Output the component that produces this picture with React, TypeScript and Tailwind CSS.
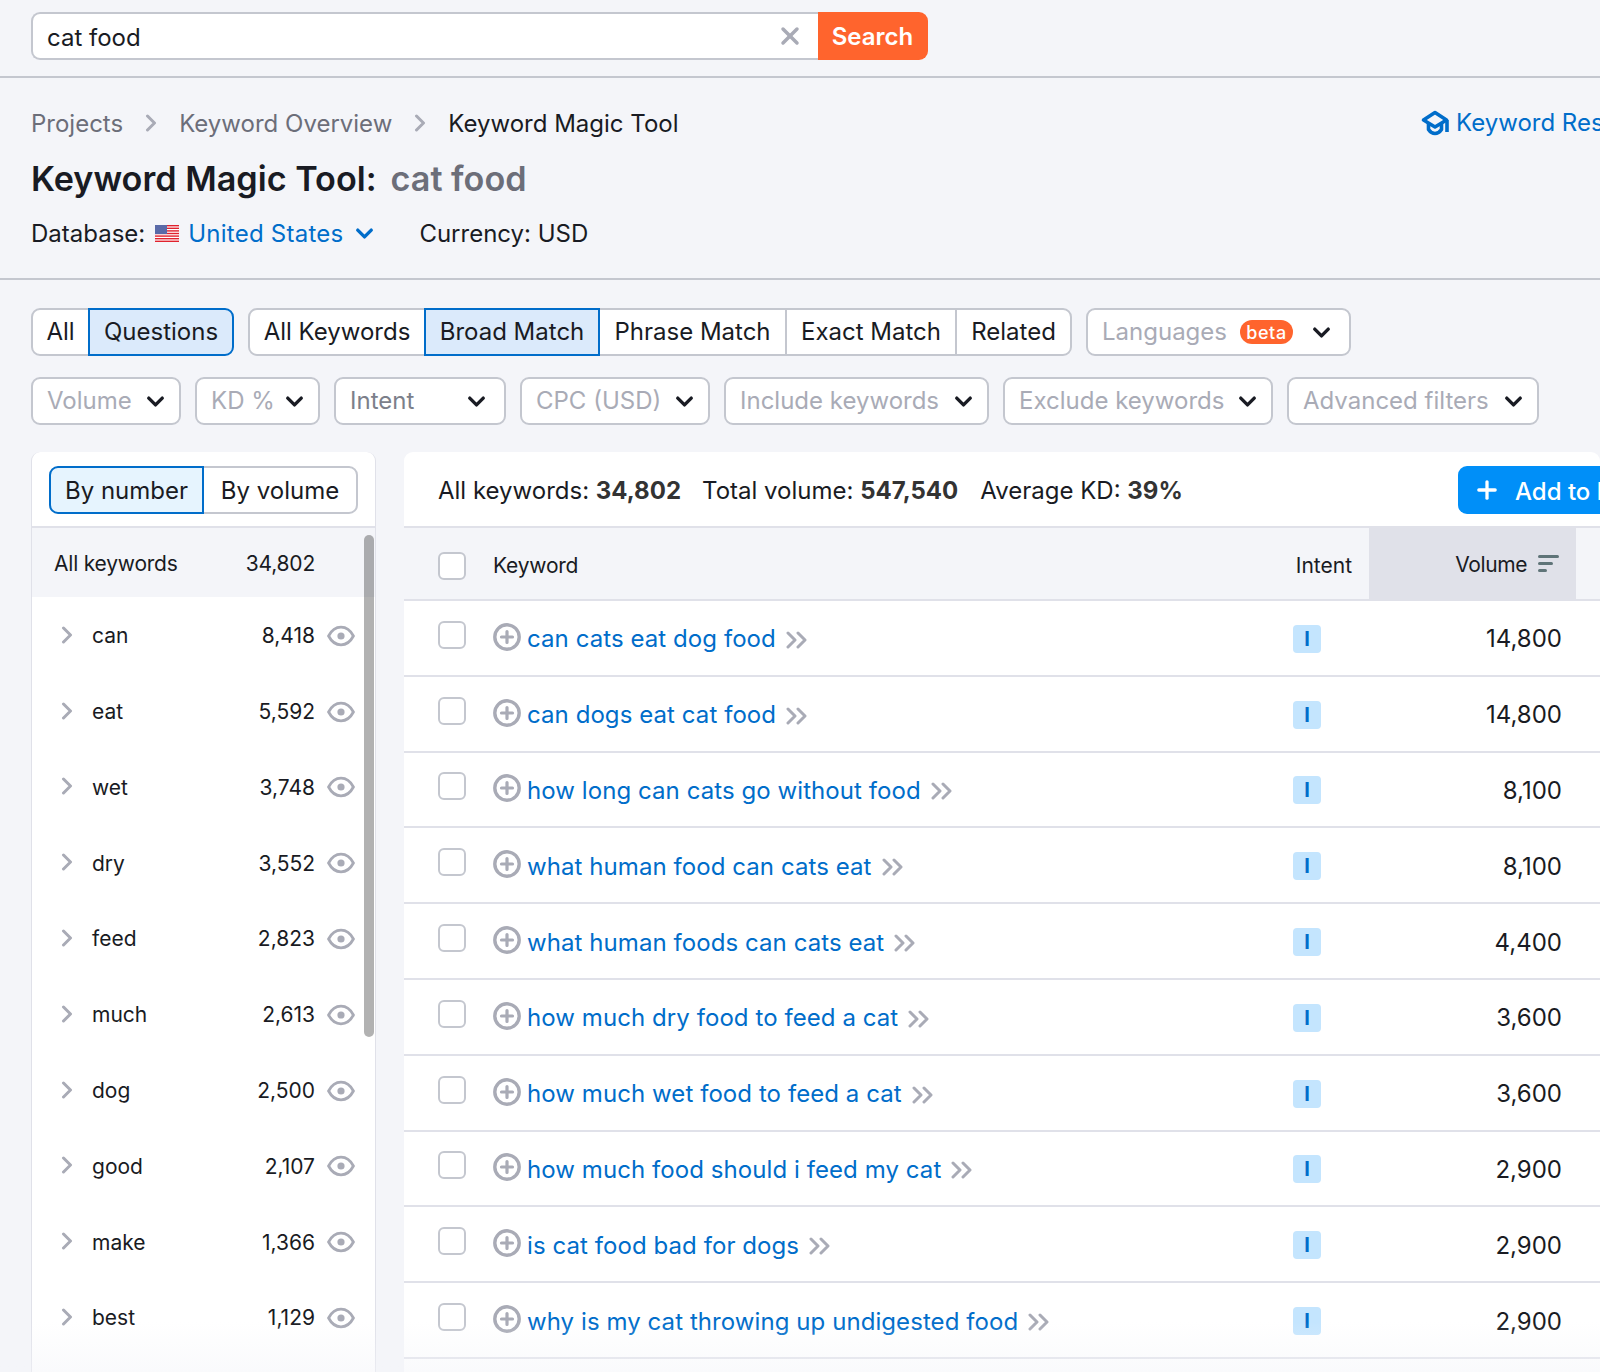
import React from 'react'
import { ChevronDown, Plus, X } from 'lucide-react'

const rows = [
  { keyword: 'can cats eat dog food', volume: '14,800' },
  { keyword: 'can dogs eat cat food', volume: '14,800' },
  { keyword: 'how long can cats go without food', volume: '8,100' },
  { keyword: 'what human food can cats eat', volume: '8,100' },
  { keyword: 'what human foods can cats eat', volume: '4,400' },
  { keyword: 'how much dry food to feed a cat', volume: '3,600' },
  { keyword: 'how much wet food to feed a cat', volume: '3,600' },
  { keyword: 'how much food should i feed my cat', volume: '2,900' },
  { keyword: 'is cat food bad for dogs', volume: '2,900' },
  { keyword: 'why is my cat throwing up undigested food', volume: '2,900' },
]

const groups = [
  { name: 'can', count: '8,418' },
  { name: 'eat', count: '5,592' },
  { name: 'wet', count: '3,748' },
  { name: 'dry', count: '3,552' },
  { name: 'feed', count: '2,823' },
  { name: 'much', count: '2,613' },
  { name: 'dog', count: '2,500' },
  { name: 'good', count: '2,107' },
  { name: 'make', count: '1,366' },
  { name: 'best', count: '1,129' },
]

const filters = [
  { label: 'Volume', className: 'w-[150px] text-[#a9abb6] pr-[10px]' },
  { label: 'KD %', className: 'w-[125px] text-[#a9abb6] pr-[10px]' },
  { label: 'Intent', className: 'w-[172px] text-[#7c7f8a] pr-[14px]' },
  { label: 'CPC (USD)', className: 'w-[190px] text-[#a9abb6] pr-[10px]' },
  { label: 'Include keywords', className: 'w-[265px] text-[#a9abb6] pr-[10px]' },
  { label: 'Exclude keywords', className: 'w-[270px] text-[#a9abb6] pr-[10px]' },
  { label: 'Advanced filters', className: 'w-[252px] text-[#a9abb6] pr-[10px]' },
]

function Segment({ label, active, className = '' }: { label: string; active?: boolean; className?: string }) {
  return (
    <div
      className={`relative -ml-[2px] flex h-12 items-center justify-center border-2 first:ml-0 ${
        active ? 'z-10 border-[#006dca] bg-[#dbeafb]' : 'border-[#c4c7cf] bg-white'
      } ${className}`}
    >
      {label}
    </div>
  )
}

function Caret() {
  return <ChevronDown className="h-[27px] w-[27px] shrink-0 text-[#191b23]" strokeWidth={3} />
}

function Chevron({ className = '' }: { className?: string }) {
  return (
    <svg viewBox="0 0 12 18" className={`h-[18px] w-3 shrink-0 ${className}`} fill="none" stroke="#a9abb6" strokeWidth="3" strokeLinecap="round" strokeLinejoin="round">
      <path d="M2.5 2 9.5 9l-7 7" />
    </svg>
  )
}

function DoubleChevron() {
  return (
    <svg viewBox="0 0 22 18" className="h-[18px] w-[22px] shrink-0 translate-y-[2px]" fill="none" stroke="#a9abb6" strokeWidth="3" strokeLinecap="round" strokeLinejoin="round">
      <path d="M2 2l7 7-7 7" />
      <path d="M12 2l7 7-7 7" />
    </svg>
  )
}

function PlusCircle() {
  return (
    <svg viewBox="0 0 28 28" className="ml-[27px] h-7 w-7 shrink-0 -translate-y-[1px]" fill="none" stroke="#a9abb6" strokeLinecap="round">
      <circle cx="14" cy="14" r="12.2" strokeWidth="3.4" />
      <path d="M14 8.5v11M8.5 14h11" strokeWidth="3.2" />
    </svg>
  )
}

function EyeIcon() {
  return (
    <svg viewBox="0 0 28 22" className="h-[22px] w-[28px] shrink-0 translate-y-[1px]" fill="none">
      <path d="M1.6 11C4.6 5.2 9 2.2 14 2.2S23.4 5.2 26.4 11C23.4 16.8 19 19.8 14 19.8S4.6 16.8 1.6 11Z" stroke="#a9abb6" strokeWidth="2.8" />
      <circle cx="14" cy="11" r="3.6" fill="#a9abb6" />
    </svg>
  )
}

function CapIcon() {
  return (
    <svg viewBox="0 0 28 26" className="h-[26px] w-[28px] shrink-0" fill="none" stroke="#006dca" strokeWidth="3.6" strokeLinejoin="round">
      <path d="M14 2.5 25.5 10 14 17 2.5 10Z" />
      <path d="M7.5 13v6.5c2 3 4.2 4 6.5 4s4.5-1 6.5-4V13" />
      <path d="M26 10v12" />
    </svg>
  )
}

function FlagIcon() {
  return (
    <svg viewBox="0 0 24 17" className="h-[17px] w-6 shrink-0">
      <rect width="24" height="17" fill="#fff" />
      {[0, 2.6, 5.2, 7.8, 10.4, 13, 15.6].map((y) => (
        <rect key={y} y={y} width="24" height="1.4" fill="#e0222e" />
      ))}
      <rect width="12" height="9" fill="#5a6aa8" />
    </svg>
  )
}

function SortIcon() {
  return (
    <svg viewBox="0 0 21 17" className="h-[17px] w-[21px] shrink-0" fill="#5f7478">
      <rect x="0" y="0" width="21" height="3" rx="1.5" />
      <rect x="0" y="7" width="15" height="3" rx="1.5" />
      <rect x="0" y="14" width="9" height="3" rx="1.5" />
    </svg>
  )
}

export default function App() {
  return (
    <div className="relative h-[1372px] w-[1600px] overflow-hidden bg-[#f4f5f9] font-['Inter',sans-serif] text-[24px] text-[#191b23]">
      <div className="flex h-[78px] border-b-2 border-[#c4c7cf] pl-[31px] pt-3">
        <div className="flex h-12 w-[787px] items-center justify-between rounded-l-[9px] border-2 border-r-0 border-[#c4c7cf] bg-white pl-[14px] pr-[14px]">
          <span className="pt-[3px]">cat food</span>
          <X className="h-7 w-7 text-[#a9abb6]" strokeWidth={3} />
        </div>
        <div className="flex h-12 w-[110px] items-center justify-center rounded-r-[9px] bg-[#ff642d] pr-[1px] pt-[2px] font-semibold text-white">
          Search
        </div>
      </div>

      <div className="border-b-2 border-[#c4c7cf] pb-[27px] pl-[31px] pt-[27px]">
        <div className="flex h-9 items-center">
          <span className="pt-[2px] text-[#6c6e79]">Projects</span>
          <Chevron className="mx-[22px]" />
          <span className="pt-[2px] text-[#6c6e79]">Keyword Overview</span>
          <Chevron className="mx-[22px]" />
          <span className="pt-[2px]">Keyword Magic Tool</span>
          <div className="ml-auto flex w-[179px] shrink-0 items-center gap-[7px] overflow-hidden whitespace-nowrap text-[#006dca]">
            <CapIcon />
            <span>Keyword Research</span>
          </div>
        </div>
        <div className="mt-[13px] flex h-12 items-center pt-[1px] text-[34.2px] font-semibold">
          <span>Keyword Magic Tool:</span>
          <span className="ml-[14px] text-[#6c6e79]">cat food</span>
        </div>
        <div className="mt-[13px] flex h-9 items-center">
          <span className="pt-[2px]">Database:</span>
          <span className="ml-[10px]"><FlagIcon /></span>
          <span className="ml-[9px] pt-[2px] tracking-[0.01em] text-[#006dca]">United States</span>
          <ChevronDown className="ml-[8px] h-[27px] w-[27px] text-[#006dca]" strokeWidth={3} />
          <span className="ml-[41px] pt-[2px]">Currency: USD</span>
        </div>
      </div>

      <div className="pl-[31px] pt-7">
        <div className="flex">
          <div className="flex">
            <Segment label="All" className="w-[59px] rounded-l-[9px]" />
            <Segment label="Questions" active className="w-[146px] rounded-r-[9px]" />
          </div>
          <div className="ml-[14px] flex">
            <Segment label="All Keywords" className="w-[178px] rounded-l-[9px]" />
            <Segment label="Broad Match" active className="w-[176px]" />
            <Segment label="Phrase Match" className="w-[189px]" />
            <Segment label="Exact Match" className="w-[172px]" />
            <Segment label="Related" className="w-[117px] rounded-r-[9px]" />
          </div>
          <div className="ml-[14px] flex h-12 w-[265px] items-center rounded-[9px] border-2 border-[#c4c7cf] bg-white pl-[14px] text-[#a9abb6]">
            <span>Languages</span>
            <span className="ml-[13px] flex h-6 w-[53px] items-center justify-center rounded-[12px] bg-[#ff642d] text-[18px] font-medium tracking-[0.03em] text-white">
              beta
            </span>
            <span className="ml-[15px]"><Caret /></span>
          </div>
        </div>

        <div className="mt-[21px] flex gap-[14px]">
          {filters.map((f) => (
            <div
              key={f.label}
              className={`flex h-12 shrink-0 items-center justify-between rounded-[9px] border-2 border-[#c4c7cf] bg-white pl-[14px] ${f.className}`}
            >
              <span>{f.label}</span>
              <Caret />
            </div>
          ))}
        </div>

        <div className="mt-[27px] flex items-start gap-7">
          <div className="relative h-[920px] w-[345px] shrink-0 overflow-hidden rounded-t-[9px] border-x border-[#e0e1e9] bg-white">
            <div className="h-[76px] border-b-2 border-[#e0e1e9] pl-[17px] pt-[14px]">
              <div className="flex">
                <Segment label="By number" active className="w-[155px] rounded-l-[9px] pt-[2px] !bg-[#e6f4fe]" />
                <Segment label="By volume" className="w-[156px] rounded-r-[9px] pt-[2px]" />
              </div>
            </div>
            <div className="flex h-[69px] items-center bg-[#f4f5f9] pl-[22px] pr-[60px] pt-[2px] text-[21px] tracking-[-0.01em]">
              <span>All keywords</span>
              <span className="ml-auto">34,802</span>
            </div>
            {groups.map((g) => (
              <div key={g.name} className="flex h-[75.8px] items-center pl-[29px] pr-[20px] text-[21px]">
                <Chevron />
                <span className="ml-[19px] pt-[2px]">{g.name}</span>
                <span className="ml-auto mr-[12px] pt-[2px]">{g.count}</span>
                <EyeIcon />
              </div>
            ))}
            <div className="absolute right-[1px] top-[83px] h-[502px] w-[10px] rounded-full bg-black/30" />
          </div>

          <div className="h-[920px] w-[1196px] shrink-0 rounded-t-[9px] bg-white">
            <div className="flex h-[76px] items-start border-b-2 border-[#e0e1e9] pl-[34px] pt-[14px]">
              <div className="flex h-12 items-center pt-[2px]">
                <span>All keywords: <b className="font-bold text-[#333]">34,802</b></span>
                <span className="ml-[21px]">Total volume: <b className="font-bold text-[#333]">547,540</b></span>
                <span className="ml-[22px]">Average KD: <b className="font-bold text-[#333]">39%</b></span>
              </div>
              <div className="ml-auto flex h-12 w-[142px] items-center overflow-hidden whitespace-nowrap rounded-l-[9px] bg-[#008ff8] pl-[15px] font-medium text-white">
                <Plus className="h-7 w-7 shrink-0" strokeWidth={2.8} />
                <span className="ml-[14px] pt-[3px]">Add to keyword list</span>
              </div>
            </div>

            <div className="flex h-[73px] border-b-2 border-[#e0e1e9] bg-[#f4f5f9] text-[21px]">
              <div className="ml-[34px] mt-[24px] h-7 w-7 shrink-0 rounded-[6px] border-2 border-[#c4c7cf] bg-white" />
              <span className="ml-[27px] mt-[22px] tracking-[-0.01em]">Keyword</span>
              <span className="ml-auto mr-[17px] mt-[22px]">Intent</span>
              <div className="flex w-[207px] shrink-0 items-center justify-end gap-[11px] bg-[#e0e1e9] pr-[17px]">
                <span className="pt-[3px] tracking-[-0.02em]">Volume</span>
                <SortIcon />
              </div>
              <div className="w-[24px] shrink-0" />
            </div>

            {rows.map((row) => (
              <div key={row.keyword} className="flex h-[75.8px] items-center border-b-2 border-[#e0e1e9] pr-[38px]">
                <div className="ml-[34px] h-7 w-7 shrink-0 -translate-y-[3px] rounded-[6px] border-2 border-[#c4c7cf] bg-white" />
                <PlusCircle />
                <span className="ml-[6px] pt-[3px] tracking-[0.003em] text-[#006dca]">{row.keyword}</span>
                <span className="ml-[10px]"><DoubleChevron /></span>
                <div className="ml-auto flex h-7 w-7 shrink-0 translate-y-[1px] items-center justify-center rounded-[4px] bg-[#c4e5fe] text-[20px] font-bold text-[#006dca]">
                  I
                </div>
                <span className="w-[241px] shrink-0 pt-[3px] text-right">{row.volume}</span>
              </div>
            ))}
          </div>
        </div>
      </div>

      <div className="absolute inset-x-0 bottom-0 h-[50px] bg-linear-to-b from-transparent to-[#f4f5f9]/50" />
    </div>
  )
}
